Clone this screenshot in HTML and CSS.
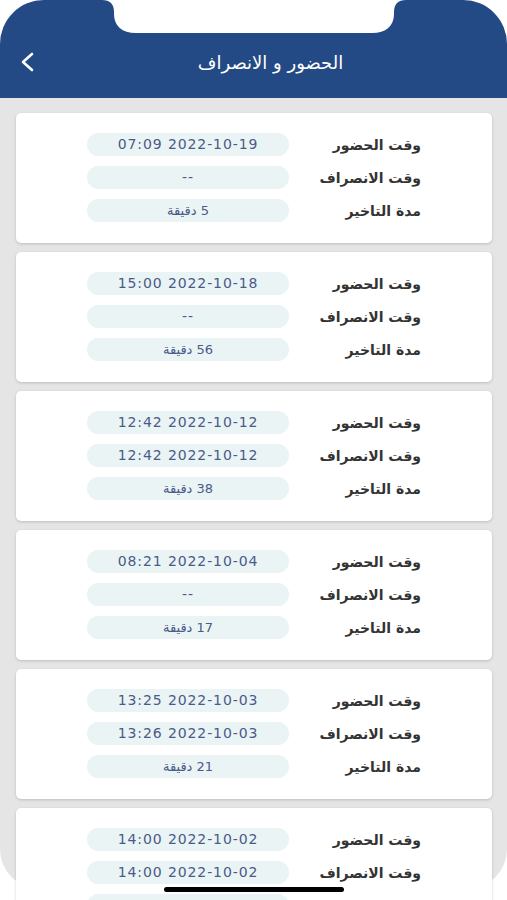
FILE: index.html
```html
<!doctype html>
<html lang="ar">
    <head>
        <meta charset="UTF-8" />
        <meta name="viewport" content="width=device-width, initial-scale=1.0" />
        <title>الحضور و الانصراف</title>
        <link rel="stylesheet" href="styles.css">
    </head>
    <body>
        <div class="screen">
            <header class="app-bar">
                <svg class="notch" width="507" height="40" viewBox="0 0 507 40">
                    <path d="M102 0 C110 0 114 4 114 12 L114 14 C114 26 122 33 136 33 L372 33 C386 33 394 26 394 14 L394 12 C394 4 398 0 406 0 Z" fill="#fff"/>
                </svg>
                <div class="bar-row">
                    <button class="back" aria-label="back">
                        <svg width="14" height="20" viewBox="0 0 14 20">
                            <path d="M12 2 L3 10 L12 18" fill="none" stroke="#fff" stroke-width="2.6" stroke-linecap="round" stroke-linejoin="round"/>
                        </svg>
                    </button>
                    <h1 class="title">الحضور و الانصراف</h1>
                </div>
            </header>

            <main class="list">
                <div class="card">
                    <span class="label">وقت الحضور</span><span class="pill">07:09 2022-10-19</span>
                    <span class="label">وقت الانصراف</span><span class="pill">--</span>
                    <span class="label">مدة التاخير</span><span class="pill ar">5 دقيقة</span>
                </div>
                <div class="card">
                    <span class="label">وقت الحضور</span><span class="pill">15:00 2022-10-18</span>
                    <span class="label">وقت الانصراف</span><span class="pill">--</span>
                    <span class="label">مدة التاخير</span><span class="pill ar">56 دقيقة</span>
                </div>
                <div class="card">
                    <span class="label">وقت الحضور</span><span class="pill">12:42 2022-10-12</span>
                    <span class="label">وقت الانصراف</span><span class="pill">12:42 2022-10-12</span>
                    <span class="label">مدة التاخير</span><span class="pill ar">38 دقيقة</span>
                </div>
                <div class="card">
                    <span class="label">وقت الحضور</span><span class="pill">08:21 2022-10-04</span>
                    <span class="label">وقت الانصراف</span><span class="pill">--</span>
                    <span class="label">مدة التاخير</span><span class="pill ar">17 دقيقة</span>
                </div>
                <div class="card">
                    <span class="label">وقت الحضور</span><span class="pill">13:25 2022-10-03</span>
                    <span class="label">وقت الانصراف</span><span class="pill">13:26 2022-10-03</span>
                    <span class="label">مدة التاخير</span><span class="pill ar">21 دقيقة</span>
                </div>
                <div class="card">
                    <span class="label">وقت الحضور</span><span class="pill">14:00 2022-10-02</span>
                    <span class="label">وقت الانصراف</span><span class="pill">14:00 2022-10-02</span>
                    <span class="label">مدة التاخير</span><span class="pill ar">-- دقيقة</span>
                </div>
            </main>

            <div class="home-indicator"></div>
        </div>
    </body>
</html>
```

FILE: styles.css
```css
body {
    margin: 0;
    padding: 0;
    background: #fff;
    font-family: "DejaVu Sans", sans-serif;
    height: 900px;
    overflow: hidden;
}
.screen {
    position: relative;
    height: 889px;
    background: #e5e5e5;
    border-radius: 44px 44px 40px 40px;
}
.app-bar {
    position: relative;
    height: 98px;
    box-sizing: border-box;
    padding-top: 44px;
    background: #244a85;
    border-radius: 44px 44px 0 0;
}
.notch {
    position: absolute;
    top: 0;
    left: 0;
}
.bar-row {
    display: flex;
    align-items: center;
    height: 36px;
    padding-left: 20px;
}
.back {
    width: 14px;
    height: 20px;
    padding: 0;
    border: none;
    background: none;
    cursor: pointer;
}
.back svg {
    display: block;
}
.title {
    flex: 1;
    margin: 0;
    text-align: center;
    color: #fff;
    font-size: 18px;
    font-weight: normal;
}
.list {
    display: flex;
    flex-direction: column;
    gap: 9px;
    padding: 15px 15px 0 16px;
}
.card {
    direction: rtl;
    display: grid;
    grid-template-columns: 132px 202px;
    row-gap: 10px;
    align-items: center;
    height: 130px;
    box-sizing: border-box;
    padding: 20px 71px 21px;
    background: #fff;
    border-radius: 5px;
    box-shadow: 0 1px 3px rgba(0, 0, 0, 0.18);
}
.label {
    color: #333;
    font-size: 14px;
    font-weight: bold;
    text-align: right;
}
.pill {
    direction: ltr;
    height: 23px;
    line-height: 23px;
    border-radius: 12px;
    background: #eaf4f4;
    color: #4a5a8a;
    text-align: center;
    font-size: 14px;
    letter-spacing: 0.9px;
}
.pill.ar {
    direction: rtl;
    font-size: 13px;
    letter-spacing: 0;
}
.home-indicator {
    position: absolute;
    left: 164px;
    bottom: -3px;
    width: 180px;
    height: 5px;
    border-radius: 3px;
    background: #000;
}
```
